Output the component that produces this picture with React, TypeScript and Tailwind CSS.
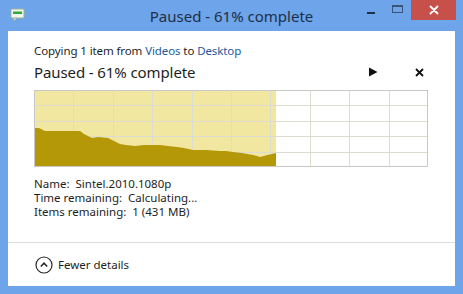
import React from "react";

const font = { fontFamily: '"Segoe UI", "Noto Sans", "Open Sans", sans-serif' };

function Chart() {
  const W = 394;
  const H = 77;
  const cols = 10;
  const rows = 5;
  const fillW = 242;
  const pts: [number, number][] = [
    [1, 38], [5, 38], [9, 40], [11, 41], [30, 41], [46, 41], [50, 44], [54, 46],
    [58, 48], [64, 47], [74, 48], [80, 51], [86, 54], [92, 55], [101, 56], [110, 55],
    [126, 55], [134, 56], [143, 57], [150, 58], [159, 60], [172, 60], [186, 61],
    [192, 61], [199, 62], [208, 63], [219, 65], [223, 66], [226, 67], [230, 66],
    [233, 65], [238, 64], [242, 63],
  ];
  const poly = [
    ...pts.map(([x, y]) => `${x},${y}`),
    `${fillW},${H - 1}`,
    `1,${H - 1}`,
  ].join(" ");
  return (
    <svg width={W} height={H} viewBox={`0 0 ${W} ${H}`} className="block">
      <rect x="0" y="0" width={W} height={H} fill="#ffffff" />
      <rect x="1" y="1" width={fillW - 1} height={H - 2} fill="#f2e7a0" />
      {Array.from({ length: cols - 1 }).map((_, i) => {
        const x = Math.round(((i + 1) * W) / cols) + 0.5;
        return <line key={"v" + i} x1={x} y1={0} x2={x} y2={H} stroke="#dcdcd0" strokeWidth="1" />;
      })}
      {Array.from({ length: rows - 1 }).map((_, i) => {
        const y = Math.round(((i + 1) * H) / rows) + 0.5;
        return <line key={"h" + i} x1={0} y1={y} x2={W} y2={y} stroke="#dcdcd0" strokeWidth="1" />;
      })}
      <polygon points={poly} fill="#b49808" />
      <rect x="0.5" y="0.5" width={W - 1} height={H - 1} fill="none" stroke="#c8c8c8" strokeWidth="1" />
    </svg>
  );
}

export default function App() {
  return (
    <div className="w-[463px] h-[294px] bg-[#6ea4e9] flex flex-col overflow-hidden" style={font}>
      {/* Title bar */}
      <div className="h-[31px] grid grid-cols-[1fr_auto_1fr] items-start shrink-0">
        <div className="pt-[8px] pl-[10px]">
          <svg width="16" height="14" viewBox="0 0 16 14">
            <rect x="1" y="1" width="13" height="9" rx="1" fill="#f2f6ee" stroke="#9bb39a" strokeWidth="1" />
            <rect x="3" y="3.5" width="9" height="2.5" fill="#2faa3a" />
            <path d="M4 10 L4 13 L7 10 Z" fill="#f2f6ee" stroke="#9bb39a" strokeWidth="0.8" />
          </svg>
        </div>
        <div className="text-center text-[15px] leading-[20px] text-[#1d2f47] pt-[6px] whitespace-nowrap">
          Paused - 61% complete
        </div>
        <div className="flex items-start justify-end h-[21px]">
          <div className="w-[26px] h-[20px] flex items-center justify-center">
            <div className="w-[8px] h-[2px] bg-[#1d2f47] mt-[6px]" />
          </div>
          <div className="w-[27px] h-[20px] flex items-center justify-center">
            <div className="w-[11px] h-[8px] border border-[#3a5478] border-t-2 -mt-[3px]" />
          </div>
          <div className="w-[45px] h-[20px] bg-[#c8504a] flex items-center justify-center mr-[7px]">
            <svg width="10" height="10" viewBox="0 0 10 10">
              <path d="M1.5 1.5 L8.5 8.5 M8.5 1.5 L1.5 8.5" stroke="#ffffff" strokeWidth="1.8" strokeLinecap="round" />
            </svg>
          </div>
        </div>
      </div>

      {/* Body */}
      <div className="flex-1 mx-[8px] mb-[8px] bg-white flex flex-col">
        <div className="pl-[26px] pr-[26px] pt-[12px] flex flex-col">
          <div className="text-[11.5px] leading-[16px] tracking-[-0.1px] text-[#1e1e1e] whitespace-nowrap">
            Copying 1 item from <span className="text-[#1e5aa0]">Videos</span> to{" "}
            <span className="text-[#1e5aa0]">Desktop</span>
          </div>
          <div className="flex items-center mt-[1px] h-[24px]">
            <div className="flex-1 text-[15px] leading-[22px] tracking-[-0.1px] text-[#1e1e1e] whitespace-nowrap">
              Paused - 61% complete
            </div>
            <div className="w-[10px] flex items-center justify-center mr-[37px]">
              <svg width="10" height="10" viewBox="0 0 10 10">
                <path d="M1 0.5 L9.5 5 L1 9.5 Z" fill="#111111" />
              </svg>
            </div>
            <div className="w-[9px] flex items-center justify-center mr-[5px]">
              <svg width="9" height="9" viewBox="0 0 9 9">
                <path d="M1 1 L8 8 M8 1 L1 8" stroke="#111111" strokeWidth="1.8" />
              </svg>
            </div>
          </div>
          <div className="mt-[6px]">
            <Chart />
          </div>
          <div className="mt-[10px] text-[11.5px] leading-[14px] text-[#1e1e1e] flex flex-col whitespace-nowrap">
            <div>Name:&nbsp; Sintel.2010.1080p</div>
            <div>Time remaining:&nbsp; Calculating...</div>
            <div>Items remaining:&nbsp; 1 (431 MB)</div>
          </div>
        </div>
        <div className="mt-[23px] h-px bg-[#dcdcdc]" />
        <div className="flex items-center pl-[27px] pt-[13px]">
          <svg width="18" height="18" viewBox="0 0 18 18">
            <circle cx="9" cy="9" r="8" fill="none" stroke="#2a2a2a" strokeWidth="1.2" />
            <path d="M5.8 10.5 L9 7.2 L12.2 10.5" fill="none" stroke="#2a2a2a" strokeWidth="1.6" />
          </svg>
          <span className="ml-[5px] text-[11.5px] leading-[16px] text-[#1e1e1e]">Fewer details</span>
        </div>
      </div>
    </div>
  );
}
